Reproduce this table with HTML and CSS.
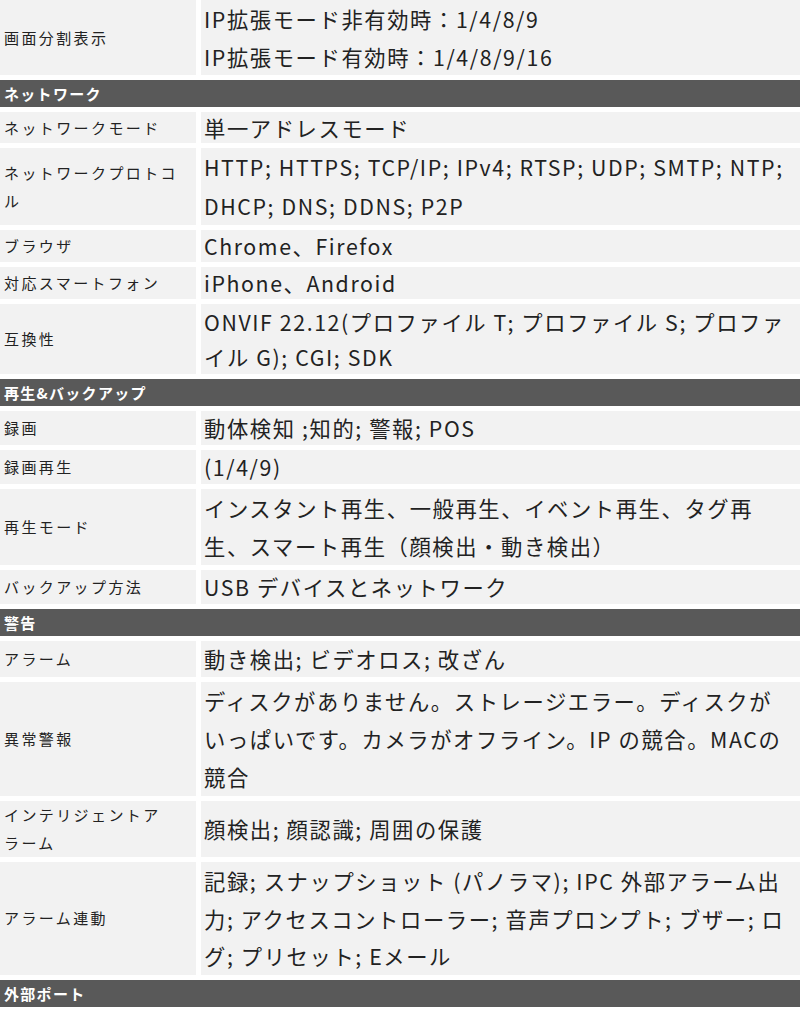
FILE: index.html
```html
<!DOCTYPE html>
<html lang="ja">
<head>
<meta charset="utf-8">
<title>仕様</title>
<link rel="stylesheet" href="styles.css">
</head>
<body>
<div class="spec">
  <div class="k">画面分割表示</div>
  <div class="v lh375">IP拡張モード非有効時：1/4/8/9<br>IP拡張モード有効時：1/4/8/9/16</div>

  <div class="hd">ネットワーク</div>

  <div class="k">ネットワークモード</div>
  <div class="v lh31">単一アドレスモード</div>

  <div class="k">ネットワークプロトコ<br>ル</div>
  <div class="v lh385">HTTP; HTTPS; TCP/IP; IPv4; RTSP; UDP; SMTP; NTP;<br>DHCP; DNS; DDNS; P2P</div>

  <div class="k">ブラウザ</div>
  <div class="v lh32">Chrome、Firefox</div>

  <div class="k">対応スマートフォン</div>
  <div class="v lh32">iPhone、Android</div>

  <div class="k">互換性</div>
  <div class="v lh35">ONVIF 22.12(プロファイル T; プロファイル S; プロファ<br>イル G); CGI; SDK</div>

  <div class="hd">再生&amp;バックアップ</div>

  <div class="k">録画</div>
  <div class="v lh34">動体検知 ;知的; 警報; POS</div>

  <div class="k">録画再生</div>
  <div class="v lh34">(1/4/9)</div>

  <div class="k">再生モード</div>
  <div class="v lh38">インスタント再生、一般再生、イベント再生、タグ再<br>生、スマート再生（顔検出・動き検出）</div>

  <div class="k">バックアップ方法</div>
  <div class="v lh34">USB デバイスとネットワーク</div>

  <div class="hd">警告</div>

  <div class="k">アラーム</div>
  <div class="v lh36">動き検出; ビデオロス; 改ざん</div>

  <div class="k">異常警報</div>
  <div class="v lh38">ディスクがありません。ストレージエラー。ディスクが<br>いっぱいです。カメラがオフライン。IP の競合。MACの<br>競合</div>

  <div class="k lh28">インテリジェントア<br>ラーム</div>
  <div class="v">顔検出; 顔認識; 周囲の保護</div>

  <div class="k">アラーム連動</div>
  <div class="v lh375">記録; スナップショット (パノラマ); IPC 外部アラーム出<br>力; アクセスコントローラー; 音声プロンプト; ブザー; ロ<br>グ; プリセット; Eメール</div>

  <div class="hd">外部ポート</div>
</div>
</body>
</html>
```
FILE: styles.css
```css
html, body {
  margin: 0;
  padding: 0;
  background: #ffffff;
}
body {
  font-family: "Noto Sans CJK JP", "Noto Sans", sans-serif;
  color: #222222;
}
.spec {
  display: grid;
  grid-template-columns: 196px 1fr;
  gap: 5px;
  width: 800px;
}
.k, .v {
  background: #f2f2f2;
  display: flex;
  align-items: center;
  white-space: nowrap;
}
.k {
  font-size: 15px;
  letter-spacing: 2.4px;
  line-height: 28px;
  padding-left: 4px;
}
.v {
  font-size: 21.3px;
  letter-spacing: 1.6px;
  line-height: 32px;
  padding-left: 3px;
}
.hd {
  grid-column: 1 / -1;
  background: #595959;
  color: #ffffff;
  font-size: 15px;
  font-weight: 700;
  letter-spacing: 1.3px;
  height: 27px;
  line-height: 27px;
  padding-left: 4px;
}
.lh28 { line-height: 28px; }
.lh31 { line-height: 31px; }
.lh32 { line-height: 32px; }
.lh34 { line-height: 34px; }
.lh35 { line-height: 35px; }
.lh36 { line-height: 36px; }
.lh375 { line-height: 37.5px; }
.lh38 { line-height: 38px; }
.lh385 { line-height: 38.5px; }
```
